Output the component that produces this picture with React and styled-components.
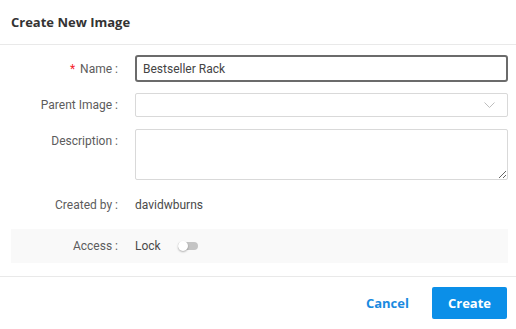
import styled, { createGlobalStyle } from "styled-components";
import React, { useState } from 'react';

const GlobalStyle = createGlobalStyle`
    body {
        margin: 0;
        background: #fff;
        font-family: Roboto, "Liberation Sans", Arial, sans-serif;
    }
`;

const Dialog = styled.div`
    width: 516px;
    height: 329px;
    display: flex;
    flex-direction: column;
    box-sizing: border-box;
`;

const Header = styled.div`
    height: 44px;
    padding: 0 11px;
    display: flex;
    align-items: center;
    border-bottom: 1px solid #e9e9e9;
    font-family: "Open Sans", "Noto Sans", sans-serif;
    font-weight: 700;
    font-size: 13px;
    color: #333;
`;

const Body = styled.div`
    padding: 10px 8px 0 11px;
    display: flex;
    flex-direction: column;
`;

const Row = styled.div`
    display: flex;
    align-items: ${p => (p.$top ? 'flex-start' : 'center')};
    gap: 17px;
    min-height: ${p => p.$height || 24}px;
    margin-bottom: ${p => p.$mb || 0}px;
    background: ${p => (p.$shaded ? '#f9f9f9' : 'transparent')};
`;

const Label = styled.div`
    width: 107px;
    flex-shrink: 0;
    text-align: right;
    font-size: 12px;
    color: #5c5c5c;
    padding-top: ${p => (p.$top ? 5 : 0)}px;

    &::after {
        content: ':';
        margin-left: 3px;
    }
`;

const Star = styled.span`
    color: #f5222d;
    margin-right: 5px;
`;

const TextInput = styled.input`
    flex: 1;
    height: 27px;
    box-sizing: border-box;
    border: 2px solid #6b6b6b;
    border-radius: 3px;
    padding: 0 6px;
    font-family: Roboto, "Liberation Sans", Arial, sans-serif;
    font-size: 12px;
    color: #444;
    outline: none;
    caret-color: #333;
`;

const SelectBox = styled.div`
    flex: 1;
    height: 24px;
    box-sizing: border-box;
    border: 1px solid #d9d9d9;
    border-radius: 2px;
    display: flex;
    align-items: center;
    justify-content: flex-end;
    padding-right: 12px;
`;

const TextArea = styled.textarea`
    flex: 1;
    height: 51px;
    box-sizing: border-box;
    border: 1px solid #d9d9d9;
    border-radius: 2px;
    font-family: Roboto, "Liberation Sans", Arial, sans-serif;
    font-size: 12px;
    outline: none;
    resize: vertical;
    margin: 0;
`;

const Value = styled.div`
    font-size: 12px;
    color: #4a4a4a;
`;

const Switch = styled.button`
    width: 20px;
    height: 8px;
    border-radius: 4px;
    border: none;
    padding: 0;
    background: #c4c4c4;
    position: relative;
    cursor: pointer;

    &::after {
        content: '';
        position: absolute;
        left: 0;
        top: -1px;
        width: 10px;
        height: 10px;
        border-radius: 50%;
        background: #fff;
        box-shadow: 0 1px 2px rgba(0, 0, 0, 0.3);
    }
`;

const Footer = styled.div`
    margin-top: auto;
    height: 53px;
    border-top: 1px solid #e9e9e9;
    display: flex;
    align-items: center;
    justify-content: flex-end;
    gap: 1px;
    padding-right: 9px;
    box-sizing: border-box;
`;

const Button = styled.button`
    height: 32px;
    padding: 0 ${p => (p.$primary ? 16 : 22)}px;
    border: none;
    border-radius: 2px;
    font-family: "Open Sans", "Noto Sans", sans-serif;
    font-weight: 700;
    font-size: 13px;
    background: ${p => (p.$primary ? '#0b8fe8' : 'transparent')};
    color: ${p => (p.$primary ? '#fff' : '#1a8ae0')};
    cursor: pointer;
`;

const Chevron = () => (
    <svg width="11" height="6" viewBox="0 0 11 6" fill="none">
        <path d="M0.5 0.5 L5.5 5.5 L10.5 0.5" stroke="#bdbdbd" strokeWidth="1" />
    </svg>
);

const App = () => {
    const [name, setName] = useState('Bestseller Rack');
    const [locked, setLocked] = useState(false);

    return (
        <Dialog>
            <GlobalStyle />
            <Header>Create New Image</Header>
            <Body>
                <Row $height={27} $mb={11}>
                    <Label><Star>*</Star>Name</Label>
                    <TextInput value={name} onChange={e => setName(e.target.value)} autoFocus />
                </Row>
                <Row $mb={12}>
                    <Label>Parent Image</Label>
                    <SelectBox><Chevron /></SelectBox>
                </Row>
                <Row $top $height={51} $mb={12}>
                    <Label $top>Description</Label>
                    <TextArea />
                </Row>
                <Row $height={26} $mb={11}>
                    <Label>Created by</Label>
                    <Value>davidwburns</Value>
                </Row>
                <Row $shaded $height={34}>
                    <Label>Access</Label>
                    <Value>Lock</Value>
                    <Switch onClick={() => setLocked(!locked)} />
                </Row>
            </Body>
            <Footer>
                <Button>Cancel</Button>
                <Button $primary>Create</Button>
            </Footer>
        </Dialog>
    );
};

export default App;
